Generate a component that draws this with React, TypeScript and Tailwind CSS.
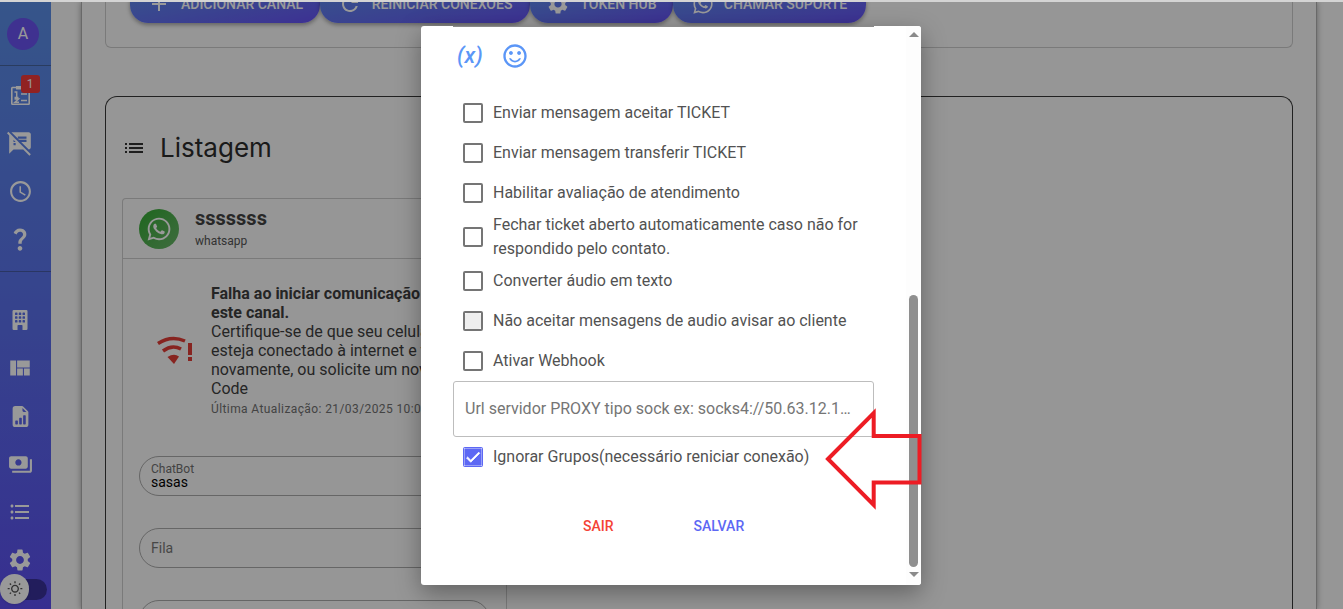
import React from "react";
import { FaWhatsapp } from "react-icons/fa";
import { BsBuildingFill, BsFileEarmarkBarGraphFill } from "react-icons/bs";
import {
  MdAccessTime,
  MdAdd,
  MdCheck,
  MdFormatListBulleted,
  MdList,
  MdOutlineWbSunny,
  MdPayments,
  MdQuestionMark,
  MdRefresh,
  MdSentimentSatisfiedAlt,
  MdSettings,
  MdSpeakerNotesOff,
  MdViewQuilt,
} from "react-icons/md";

const roboto = "font-['Roboto',sans-serif]";

function ClipboardIcon() {
  return (
    <svg width="19" height="20" viewBox="0 0 19 20" className="block">
      <path fill="none" stroke="#fff" strokeWidth="1.600" d="M5.500 2.500H1.500A.8.8 0 0 0 .8 3.300v15a.8.8 0 0 0 .7.900h16a.8.8 0 0 0 .7-.9v-15a.8.8 0 0 0-.7-.8h-4" />
      <path fill="#fff" d="M5 1h9v3.500H5z" />
      <path stroke="#fff" strokeWidth="1.500" fill="none" d="M3.500 7h2.200v5M3.500 12.500h4M3.500 14h4l-3.500 3.200h4M10 9h6M10 15.500h6" />
    </svg>
  );
}

function SideIcon({ children }: { children: React.ReactNode }) {
  return <div className="flex h-12 w-10 items-center justify-center text-white">{children}</div>;
}

function TopButton({ icon, label, w }: { icon: React.ReactNode; label: string; w: string }) {
  return (
    <div className={`${w} flex h-[38px] shrink-0 items-center justify-center gap-[10px] rounded-[18px] bg-gradient-to-br from-[#5a8fe8] to-[#6650f5] text-[14px] font-medium uppercase text-white shadow-[0_2px_4px_rgba(0,0,0,0.35)]`}>
      {icon}
      <span>{label}</span>
    </div>
  );
}

function Check({ label, kind = "off" }: { label: React.ReactNode; kind?: "off" | "on" | "muted" }) {
  return (
    <div className="flex items-center pl-[10px] text-[16px] leading-6 text-[#525252]">
      {kind === "on" ? (
        <span className="flex h-5 w-5 shrink-0 items-center justify-center rounded-[2px] bg-[#5d68f4] text-white">
          <MdCheck size={18} strokeWidth={1} />
        </span>
      ) : (
        <span className="flex h-5 w-5 shrink-0 items-center justify-center rounded-[2px] border-2 border-[#757575]">
          {kind === "muted" && <span className="h-4 w-4 rounded-[3px] bg-[#eeeeee]" />}
        </span>
      )}
      <span className="ml-[10px] w-[375px]">{label}</span>
    </div>
  );
}

function PillField({ label, value }: { label?: string; value: string }) {
  return (
    <div className="flex h-10 items-center rounded-[20px] border border-[#aaaaaa] px-[11px]">
      {label ? (
        <div className="flex flex-col">
          <span className="text-[12px] leading-[12px] text-[#707070]">{label}</span>
          <span className="mt-[-1px] text-[14px] leading-[16px] text-black">{value}</span>
        </div>
      ) : (
        <span className="text-[14px] text-[#777777]">{value}</span>
      )}
    </div>
  );
}

export default function App() {
  return (
    <div className={`${roboto} relative flex h-[609px] w-[1343px] flex-col overflow-hidden bg-[#fafafa]`}>
      <div className="z-20 h-[2px] shrink-0 bg-[#d4d4d4]" />
      <div className="flex min-h-0 flex-1">
        {/* Sidebar */}
        <aside className="relative flex w-[51px] shrink-0 flex-col bg-gradient-to-b from-[#5a8ee6] to-[#5c4ef0]">
          <div className="flex h-[64px] shrink-0 items-center border-b border-[#47659f] pl-[7px]">
            <div className="flex h-8 w-8 items-center justify-center rounded-full bg-[#6a52f0] text-[16px] text-white">A</div>
          </div>
          <div className="flex h-[206px] shrink-0 flex-col justify-start border-b border-[#475aa5] pt-[5px]">
            <SideIcon>
              <div className="relative">
                <ClipboardIcon />
                <span className="absolute left-[10px] top-[-10px] flex h-[18px] w-[19px] items-center justify-center rounded-[3px] bg-[#f23a3a] text-[12px] text-white">1</span>
              </div>
            </SideIcon>
            <SideIcon><MdSpeakerNotesOff size={26} /></SideIcon>
            <SideIcon><MdAccessTime size={25} /></SideIcon>
            <SideIcon><MdQuestionMark size={28} /></SideIcon>
          </div>
          <div className="flex flex-col pt-[24px]">
            <SideIcon><BsBuildingFill size={20} /></SideIcon>
            <SideIcon><MdViewQuilt size={26} /></SideIcon>
            <SideIcon><BsFileEarmarkBarGraphFill size={21} /></SideIcon>
            <SideIcon><MdPayments size={25} /></SideIcon>
            <SideIcon><MdFormatListBulleted size={24} /></SideIcon>
            <SideIcon><MdSettings size={26} /></SideIcon>
          </div>
          <div className="absolute left-[20px] top-[577px] h-[21px] w-[27px] rounded-r-full bg-[#39319a]" />
          <div className="absolute left-0 top-[572px] flex h-[30px] w-[29px] items-center justify-center rounded-full bg-white text-[#555555] shadow">
            <MdOutlineWbSunny size={16} />
          </div>
        </aside>

        <div className="w-[30px] shrink-0" />

        {/* Main panel */}
        <main className="flex w-[1236px] shrink-0 flex-col overflow-hidden border-x border-[#b0b0b0] pl-[23px] pr-[23px] shadow-[0_0_6px_rgba(0,0,0,0.35)]">
          <section className="flex h-[46px] shrink-0 items-end rounded-b-[6px] border-x border-b border-[#cccccc] pb-[24px] pl-[24px]">
            <div className="flex h-0 items-end gap-0">
              <TopButton w="w-[190px]" icon={<MdAdd size={24} />} label="Adicionar canal" />
              <TopButton w="w-[210px]" icon={<MdRefresh size={24} />} label="Reiniciar conexões" />
              <TopButton w="w-[143px]" icon={<MdSettings size={24} />} label="Token Hub" />
              <TopButton w="w-[193px]" icon={<FaWhatsapp size={22} />} label="Chamar suporte" />
            </div>
          </section>

          <section className="mt-[48px] flex-1 rounded-t-[12px] border-x border-t border-[#383838] pl-[16px]">
            <div className="flex h-[101px] items-center">
              <MdList size={24} className="text-[#333333]" />
              <h1 className="ml-[14px] font-['Inter',sans-serif] text-[26px] font-normal leading-none text-[#2c2c2c]">Listagem</h1>
            </div>
            <article className="h-[420px] w-[385px] rounded-t-[4px] border-x border-t border-[#cccccc]">
              <header className="flex h-[60px] items-center border-b border-[#cccccc] pl-[16px]">
                <div className="flex h-10 w-10 items-center justify-center rounded-full bg-gradient-to-br from-[#2faa2f] to-[#68b568] text-white">
                  <FaWhatsapp size={26} />
                </div>
                <div className="ml-[16px] flex flex-col">
                  <span className="text-[20px] font-bold leading-[22px] text-[#444444]">sssssss</span>
                  <span className="mt-[2px] text-[12px] leading-[20px] text-[#555555]">whatsapp</span>
                </div>
              </header>
              <div className="flex items-center pl-[34px] pt-[25px]">
                <svg width="36" height="30" viewBox="0 0 36 30" className="shrink-0">
                  <g fill="none" stroke="#e23c36" strokeWidth="3.500">
                    <path d="M1 7.500Q14 -1 28 5" />
                    <path d="M6 15Q15 8 24 13" />
                  </g>
                  <path d="M10.500 21Q17 17 22 20.500L17 28Z" fill="#e23c36" />
                  <rect x="31" y="7" width="4" height="12" fill="#e23c36" />
                  <rect x="31" y="21" width="4" height="4" fill="#e23c36" />
                </svg>
                <div className="ml-[18px] w-[262px] shrink-0 text-[16px] leading-[19px] text-[#3f3f3f]">
                  <p className="font-bold">Falha ao iniciar comunicação com este canal.</p>
                  <p>Certifique-se de que seu celular esteja conectado à internet e tente novamente, ou solicite um novo QR Code</p>
                  <p className="mt-[2px] whitespace-nowrap text-[12px] leading-[18px] tracking-[0.4px] text-[#707070]">Última Atualização: 21/03/2025 10:00</p>
                </div>
              </div>
              <div className="mx-[16px] mt-[38px] flex flex-col gap-[32px]">
                <PillField label="ChatBot" value="sasas" />
                <PillField value="Fila" />
                <PillField value="" />
              </div>
            </article>
          </section>
        </main>
      </div>

      {/* Backdrop */}
      <div className="absolute inset-x-0 bottom-0 top-[2px] bg-black/40" />

      {/* Modal */}
      <div className="absolute left-[421px] top-[26px] flex h-[559px] w-[500px] overflow-hidden rounded-[3px] bg-white shadow-[0_8px_24px_rgba(0,0,0,0.35)]">
        <div className="flex w-[485px] flex-col pl-[32px]">
          <div className="h-px w-[421px] bg-[#8a8a8a]" />
          <div className="mt-[18px] flex h-[21px] items-center pl-[4px] text-[#5b96f7]">
            <span className="text-[22px] font-medium italic leading-none">(x)</span>
            <MdSentimentSatisfiedAlt size={28} className="ml-[18px]" />
          </div>
          <div className="mt-[27px] flex flex-col">
            <div className="flex h-10 items-center"><Check label="Enviar mensagem aceitar TICKET" /></div>
            <div className="flex h-10 items-center"><Check label="Enviar mensagem transferir TICKET" /></div>
            <div className="flex h-10 items-center"><Check label="Habilitar avaliação de atendimento" /></div>
            <div className="flex h-[48px] items-center"><Check label="Fechar ticket aberto automaticamente caso não for respondido pelo contato." /></div>
            <div className="flex h-10 items-center"><Check label="Converter áudio em texto" /></div>
            <div className="flex h-10 items-center"><Check label="Não aceitar mensagens de audio avisar ao cliente" kind="muted" /></div>
            <div className="flex h-10 items-center"><Check label="Ativar Webhook" /></div>
          </div>
          <div className="flex h-[56px] w-[421px] items-center rounded-[3px] border border-[#bdbdbd] pl-[11px] pr-[14px] text-[16px] text-[#757575]">
            <span className="truncate">Url servidor PROXY tipo sock ex: socks4://50.63.12.101:4145</span>
          </div>
          <div className="flex h-10 items-center"><Check label="Ignorar Grupos(necessário reniciar conexão)" kind="on" /></div>
          <div className="mt-[29px] flex text-[14px] font-medium uppercase leading-[40px]">
            <span className="ml-[130px] text-[#f44336]">Sair</span>
            <span className="ml-[80px] text-[#5d68f4]">Salvar</span>
          </div>
        </div>
        <div className="flex w-[15px] flex-col items-center bg-[#fdfdfd]">
          <div className="mt-[6px] h-0 w-0 border-x-[5px] border-b-[5px] border-x-transparent border-b-[#8a8a8a]" />
          <div className="mt-[258px] h-[272px] w-[9px] rounded-[5px] bg-[#8f8f8f]" />
          <div className="mt-[5px] h-0 w-0 border-x-[5px] border-t-[5px] border-x-transparent border-t-[#8a8a8a]" />
        </div>
      </div>

      {/* Annotation arrow */}
      <svg className="absolute left-[820px] top-[405px]" width="104" height="108" viewBox="820 405 104 108">
        <path d="M828 459L873.700 413V436H919.500V482.500H873.700V505Z" fill="none" stroke="#ed1c24" strokeWidth="4" strokeLinejoin="miter" />
      </svg>
    </div>
  );
}
